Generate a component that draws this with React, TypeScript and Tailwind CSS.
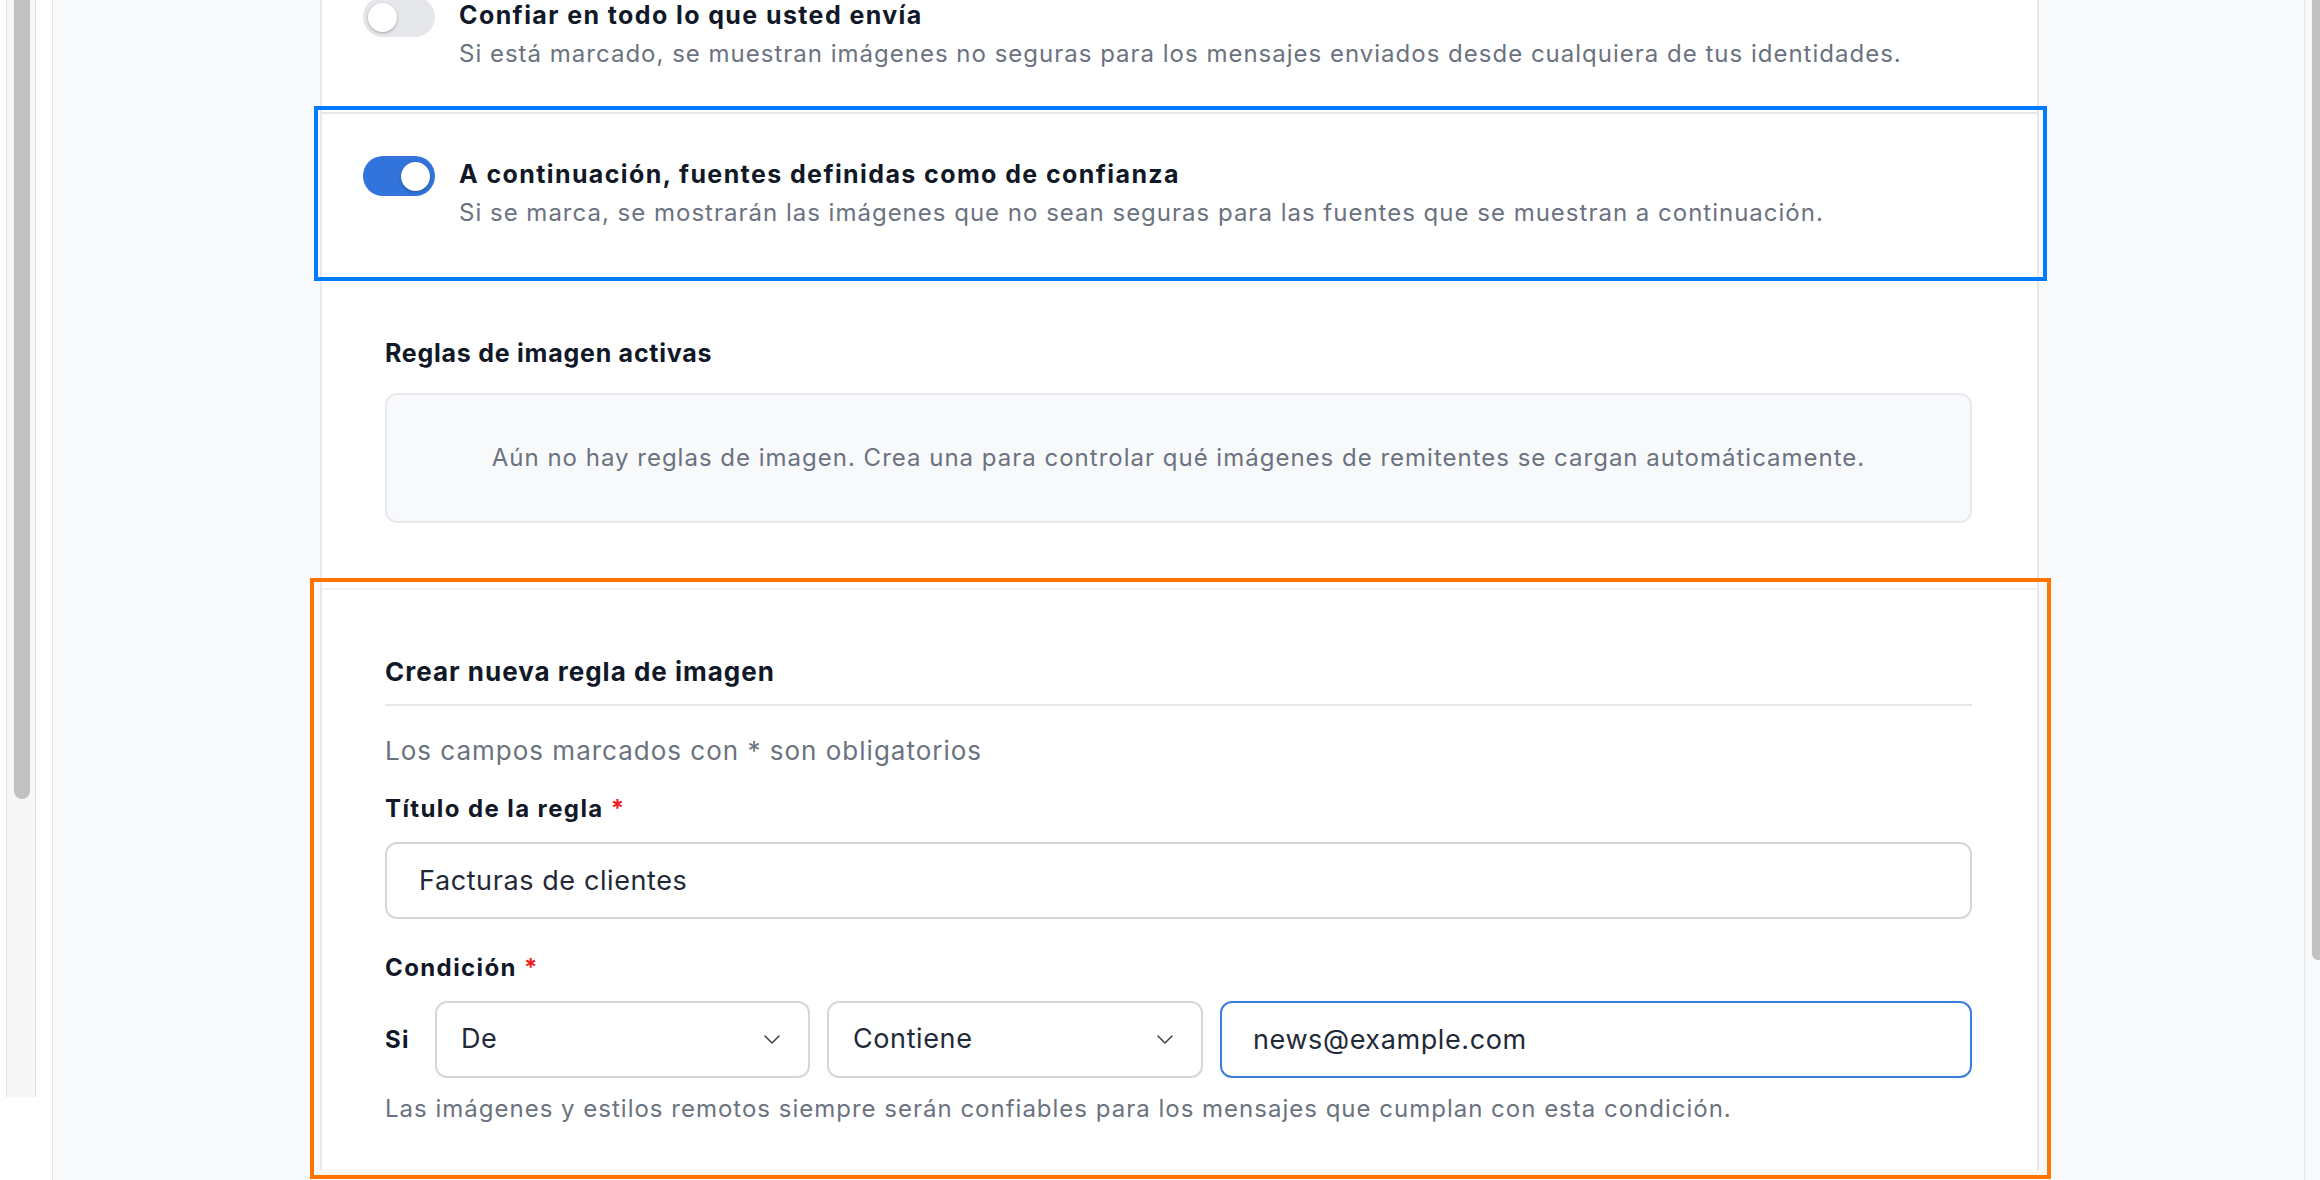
import type { ReactNode } from 'react';

function Toggle({ on }: { on: boolean }) {
  return (
    <span
      className={`flex h-[40px] w-[72px] shrink-0 items-center rounded-full px-[5px] ${
        on ? 'justify-end bg-[#3274dc]' : 'justify-start bg-[#e5e7eb]'
      }`}
    >
      <span className="h-[29px] w-[29px] rounded-full bg-white shadow-[0_1px_3px_rgba(0,0,0,0.3)]" />
    </span>
  );
}

function ToggleRow({ on, title, desc }: { on: boolean; title: string; desc: string }) {
  return (
    <div className="flex gap-[24px]">
      <div className="-mt-[2px]">
        <Toggle on={on} />
      </div>
      <div className="flex flex-col gap-[7px]">
        <p className="text-[25px] font-bold leading-[32px] tracking-[1.4px] text-[#111827]">{title}</p>
        <p className="text-[24px] leading-[32px] tracking-[1px] text-[#6b7280]">{desc}</p>
      </div>
    </div>
  );
}

function Label({ children }: { children: ReactNode }) {
  return (
    <p className="text-[24px] font-bold leading-[32px] tracking-[1.4px] text-[#111827]">
      {children} <span className="text-[#ee1c1c]">*</span>
    </p>
  );
}

function Chevron() {
  return (
    <svg width="16" height="9" viewBox="0 0 16 9" fill="none" className="shrink-0">
      <polyline points="1,1 8,8 15,1" stroke="#374151" strokeWidth="1.5" strokeLinecap="round" strokeLinejoin="round" />
    </svg>
  );
}

function Select({ value, width }: { value: string; width: string }) {
  return (
    <div
      className={`flex h-[77px] ${width} shrink-0 items-center justify-between rounded-[12px] border-2 border-[#d4d7dc] bg-white pl-[24px] pr-[28px] text-[27px] tracking-[0.6px] text-[#1f2937]`}
    >
      <span>{value}</span>
      <Chevron />
    </div>
  );
}

export default function App() {
  return (
    <div className="flex h-[1180px] w-[2320px] overflow-hidden bg-white font-['Inter',sans-serif]">
      {/* side panel scrollbar */}
      <aside className="w-[53px] shrink-0 border-r border-[#e5e7eb] bg-white">
        <div className="ml-[6px] h-[1097px] w-[30px] border-x border-[#e3e3e3] bg-[#f7f7f7]">
          <div className="ml-[7px] h-[799px] w-[16px] rounded-b-full bg-[#c1c1c1]" />
        </div>
      </aside>

      <main className="flex-1 bg-[#f8f9fa] pl-[267px]">
        <div className="-mt-[45px] w-[1719px] border-x-2 border-[#e6e8eb] bg-white">
          <section className="pb-[42px] pl-[41px] pr-[40px] pt-[44px]">
            <ToggleRow
              on={false}
              title="Confiar en todo lo que usted envía"
              desc="Si está marcado, se muestran imágenes no seguras para los mensajes enviados desde cualquiera de tus identidades."
            />
          </section>

          <section className="relative border-t-2 border-[#e5e7eb] pb-[42px] pl-[41px] pr-[40px] pt-[44px]">
            <ToggleRow
              on
              title="A continuación, fuentes definidas como de confianza"
              desc="Si se marca, se mostrarán las imágenes que no sean seguras para las fuentes que se muestran a continuación."
            />
            {/* selection ring */}
            <div className="pointer-events-none absolute -bottom-[10px] -left-[8px] -right-[10px] -top-[8px] border-4 border-[#007aff]" />
          </section>

          <section className="pb-[65px] pl-[63px] pr-[65px] pt-[66px]">
            <h3 className="text-[25px] font-bold leading-[32px] tracking-[0.75px] text-[#111827]">Reglas de imagen activas</h3>
            <div className="mt-[24px] rounded-[12px] border-2 border-[#e7e9ed] bg-[#f8f9fb] py-[47px] text-center text-[24px] leading-[32px] tracking-[1px] text-[#6b7280]">
              Aún no hay reglas de imagen. Crea una para controlar qué imágenes de remitentes se cargan automáticamente.
            </div>
          </section>

          <section className="relative border-t-2 border-[#f1f2f4] pb-[45px] pl-[63px] pr-[65px] pt-[64px]">
            <h3 className="border-b-2 border-[#e5e7eb] pb-[14px] text-[26px] font-bold leading-[36px] tracking-[1px] text-[#111827]">
              Crear nueva regla de imagen
            </h3>
            <p className="mt-[27px] text-[26px] leading-[36px] tracking-[1px] text-[#6b7280]">
              Los campos marcados con * son obligatorios
            </p>

            <div className="mt-[24px]">
              <Label>Título de la regla</Label>
            </div>
            <input
              readOnly
              value="Facturas de clientes"
              className="mt-[17px] block h-[77px] w-full rounded-[12px] border-2 border-[#d4d7dc] bg-white px-[32px] text-[27px] tracking-[0.6px] text-[#1f2937] outline-none"
            />

            <div className="mt-[33px]">
              <Label>Condición</Label>
            </div>
            <div className="mt-[17px] flex items-center gap-[17px]">
              <span className="w-[33px] shrink-0 text-[24px] font-bold tracking-[1.4px] text-[#111827]">Si</span>
              <Select value="De" width="w-[375px]" />
              <Select value="Contiene" width="w-[376px]" />
              <input
                readOnly
                value="news@example.com"
                className="block h-[77px] min-w-0 flex-1 rounded-[12px] border-2 border-[#3b7ddd] bg-white px-[31px] text-[27px] tracking-[0.6px] text-[#1f2937] outline-none"
              />
            </div>
            <p className="mt-[15px] text-[24px] leading-[32px] tracking-[1px] text-[#6b7280]">
              Las imágenes y estilos remotos siempre serán confiables para los mensajes que cumplan con esta condición.
            </p>
            {/* selection ring */}
            <div className="pointer-events-none absolute -bottom-[9px] -left-[12px] -right-[14px] -top-[12px] border-4 border-[#ff7300]" />
          </section>
        </div>
      </main>

      {/* window scrollbar */}
      <div className="w-[16px] shrink-0 border-l border-[#e5e7eb] bg-[#f8f9fa]">
        <div className="ml-[7px] h-[960px] w-[8px] rounded-bl-[6px] bg-[#c1c1c1]" />
      </div>
    </div>
  );
}
